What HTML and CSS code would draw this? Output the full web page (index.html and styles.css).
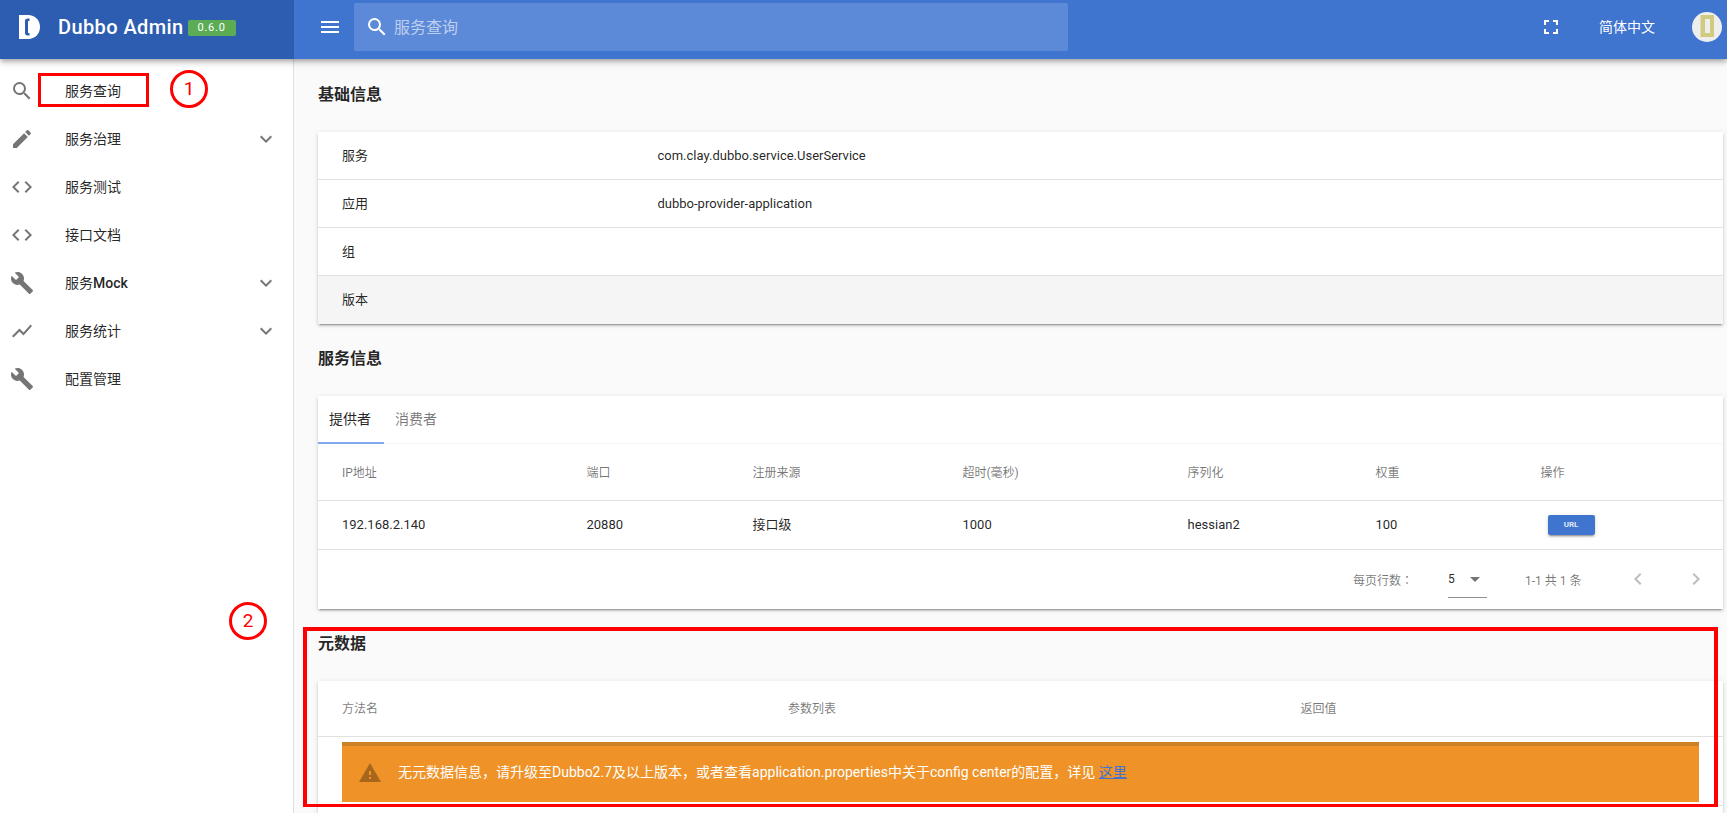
FILE: index.html
```html
<!DOCTYPE html>
<html lang="zh">
<head>
    <meta charset="UTF-8">
    <meta name="viewport" content="width=device-width, initial-scale=1.0">
    <title>Dubbo Admin</title>
    <link rel="stylesheet" href="styles.css">
</head>
<body>
    <svg class="icon-defs" xmlns="http://www.w3.org/2000/svg">
        <symbol id="i-search" viewBox="0 0 24 24"><path d="M15.5 14h-.79l-.28-.27A6.471 6.471 0 0 0 16 9.5 6.5 6.5 0 1 0 9.5 16c1.61 0 3.09-.59 4.23-1.57l.27.28v.79l5 4.99L20.49 19l-4.99-5zm-6 0C7.01 14 5 11.99 5 9.5S7.01 5 9.5 5 14 7.01 14 9.5 11.99 14 9.5 14z"/></symbol>
        <symbol id="i-pencil" viewBox="0 0 24 24"><path d="M3 17.25V21h3.75L17.81 9.94l-3.75-3.75L3 17.25zM20.71 7.04c.39-.39.39-1.02 0-1.41l-2.34-2.34c-.39-.39-1.02-.39-1.41 0l-1.83 1.83 3.75 3.75 1.83-1.83z"/></symbol>
        <symbol id="i-code" viewBox="0 0 24 24"><path d="M9.4 16.6L4.8 12l4.6-4.6L8 6l-6 6 6 6 1.4-1.4zm5.2 0l4.6-4.6-4.6-4.6L16 6l6 6-6 6-1.4-1.4z"/></symbol>
        <symbol id="i-build" viewBox="0 0 24 24"><path d="M22.7 19l-9.1-9.1c.9-2.3.4-5-1.5-6.9-2-2-5-2.4-7.4-1.3L9 6 6 9 1.6 4.7C.4 7.1.9 10.1 2.9 12.1c1.9 1.9 4.6 2.4 6.9 1.5l9.1 9.1c.4.4 1 .4 1.4 0l2.3-2.3c.5-.4.5-1.1.1-1.4z"/></symbol>
        <symbol id="i-chart" viewBox="0 0 24 24"><path d="M3.5 18.49l6-6.01 4 4L22 6.92l-1.41-1.41-7.09 7.97-4-4L2 16.99z"/></symbol>
        <symbol id="i-more" viewBox="0 0 24 24"><path d="M16.59 8.59L12 13.17 7.41 8.59 6 10l6 6 6-6z"/></symbol>
        <symbol id="i-left" viewBox="0 0 24 24"><path d="M15.41 7.41L14 6l-6 6 6 6 1.41-1.41L10.83 12z"/></symbol>
        <symbol id="i-right" viewBox="0 0 24 24"><path d="M10 6L8.59 7.41 13.17 12l-4.58 4.59L10 18l6-6z"/></symbol>
    </svg>

    <header class="toolbar">
        <div class="brand">
            <svg class="brand-logo" viewBox="0 0 21 24"><path fill="#fff" d="M0 0h9c7 0 12 5 12 12s-5 12-12 12H0z"/><path fill="#2d5db0" d="M10.500 3.500h-2C7 3.500 6 4.500 6 6v12c0 1.500 1 2.500 2.500 2.500h2V18h-1C9 18 9 17.500 9 17V7c0-.5 0-1 .5-1h1z"/></svg>
            <span class="brand-name">Dubbo Admin</span>
            <span class="brand-version">0.6.0</span>
        </div>
        <div class="toolbar-main">
            <button class="menu-btn" aria-label="menu"><span></span><span></span><span></span></button>
            <div class="search-box">
                <svg class="search-icon"><use href="#i-search"/></svg>
                <span class="search-text">服务查询</span>
            </div>
            <div class="toolbar-right">
                <svg class="fullscreen-icon" viewBox="0 0 14 14"><path fill="#fff" d="M0 0h5v2H2v3H0zM9 0h5v5h-2V2H9zM0 9h2v3h3v2H0zM12 9h2v5H9v-2h3z"/></svg>
                <span class="lang">简体中文</span>
                <div class="avatar">
                    <svg viewBox="0 0 30 30"><path fill="#cfcc80" fill-rule="evenodd" d="M8.500 3H22v22H8.500zM13 7v14h5V7z"/></svg>
                </div>
            </div>
        </div>
    </header>

    <div class="layout">
        <nav class="sidebar">
            <a class="nav-item"><svg class="nav-icon"><use href="#i-search"/></svg><span class="nav-text">服务查询</span></a>
            <a class="nav-item"><svg class="nav-icon"><use href="#i-pencil"/></svg><span class="nav-text">服务治理</span><svg class="nav-arrow"><use href="#i-more"/></svg></a>
            <a class="nav-item"><svg class="nav-icon"><use href="#i-code"/></svg><span class="nav-text">服务测试</span></a>
            <a class="nav-item"><svg class="nav-icon"><use href="#i-code"/></svg><span class="nav-text">接口文档</span></a>
            <a class="nav-item"><svg class="nav-icon"><use href="#i-build"/></svg><span class="nav-text">服务<b>Mock</b></span><svg class="nav-arrow"><use href="#i-more"/></svg></a>
            <a class="nav-item"><svg class="nav-icon"><use href="#i-chart"/></svg><span class="nav-text">服务统计</span><svg class="nav-arrow"><use href="#i-more"/></svg></a>
            <a class="nav-item"><svg class="nav-icon"><use href="#i-build"/></svg><span class="nav-text">配置管理</span></a>
        </nav>

        <main class="content">
            <h2 class="section-title">基础信息</h2>
            <section class="card">
                <div class="info-row"><span class="info-key">服务</span><span>com.clay.dubbo.service.UserService</span></div>
                <div class="info-row"><span class="info-key">应用</span><span>dubbo-provider-application</span></div>
                <div class="info-row"><span class="info-key">组</span><span></span></div>
                <div class="info-row info-row-hover"><span class="info-key">版本</span><span></span></div>
            </section>

            <h2 class="section-title">服务信息</h2>
            <section class="card">
                <div class="tabs">
                    <div class="tab tab-active">提供者</div>
                    <div class="tab">消费者</div>
                </div>
                <table class="grid grid-providers">
                    <colgroup>
                        <col class="c-ip"><col class="c-port"><col class="c-source"><col class="c-timeout"><col class="c-serial"><col class="c-weight"><col>
                    </colgroup>
                    <thead>
                        <tr><th>IP地址</th><th>端口</th><th>注册来源</th><th>超时(毫秒)</th><th>序列化</th><th>权重</th><th>操作</th></tr>
                    </thead>
                    <tbody>
                        <tr>
                            <td>192.168.2.140</td><td>20880</td><td class="cell-cjk">接口级</td><td>1000</td><td>hessian2</td><td>100</td>
                            <td><button class="url-btn">URL</button></td>
                        </tr>
                    </tbody>
                </table>
                <div class="pager">
                    <span class="pager-label" lang="zh-TW">每页行数：</span>
                    <div class="pager-select">
                        <span>5</span>
                        <i class="caret"></i>
                    </div>
                    <span class="pager-range">1-1 共 1 条</span>
                    <svg class="pager-nav pager-prev"><use href="#i-left"/></svg>
                    <svg class="pager-nav pager-next"><use href="#i-right"/></svg>
                </div>
            </section>

            <h2 class="section-title">元数据</h2>
            <section class="card card-last">
                <table class="grid grid-meta">
                    <colgroup><col class="c-method"><col class="c-params"><col></colgroup>
                    <thead>
                        <tr><th>方法名</th><th>参数列表</th><th>返回值</th></tr>
                    </thead>
                </table>
                <div class="alert-row">
                    <div class="alert">
                        <svg class="alert-icon" viewBox="0 0 24 24"><path d="M1 21h22L12 2 1 21zm12-3h-2v-2h2v2zm0-4h-2v-4h2v4z"/></svg>
                        <span class="alert-text">无元数据信息，请升级至Dubbo2.7及以上版本，或者查看application.properties中关于config center的配置，详见 <a class="alert-link">这里</a></span>
                    </div>
                </div>
            </section>
        </main>
    </div>

    <!-- 标注 -->
    <div class="mark-box mark-box-nav"></div>
    <div class="mark-num mark-num-1">1</div>
    <div class="mark-num mark-num-2">2</div>
    <div class="mark-box mark-box-meta"></div>
</body>
</html>
```

FILE: styles.css
```css
html, body {
    height: 100%;
}
body {
    margin: 0;
    overflow: hidden;
    position: relative;
    display: flex;
    flex-direction: column;
    background: #fafafa;
    color: rgba(0, 0, 0, 0.87);
    font-family: Roboto, "Noto Sans CJK SC", sans-serif;
    font-size: 13px;
}
.icon-defs {
    display: none;
}

/* 顶栏 */
.toolbar {
    height: 59px;
    flex: none;
    display: flex;
    background: #3f74cf;
    color: #fff;
    position: relative;
    z-index: 5;
    box-shadow: 0 2px 4px -1px rgba(0, 0, 0, 0.2), 0 4px 5px 0 rgba(0, 0, 0, 0.14), 0 1px 10px 0 rgba(0, 0, 0, 0.12);
}
.brand {
    width: 294px;
    flex: none;
    box-sizing: border-box;
    padding: 0 0 5px 19px;
    display: flex;
    align-items: center;
    background: #2d5db0;
}
.brand-logo {
    width: 21px;
    height: 24px;
    margin-right: 18px;
}
.brand-name {
    font-size: 20px;
    font-weight: 500;
    letter-spacing: 0.4px;
}
.brand-version {
    width: 48px;
    height: 16px;
    margin-left: 4px;
    margin-top: 2px;
    border-radius: 2px;
    background: #5cac56;
    font-size: 11px;
    line-height: 16px;
    text-align: center;
    letter-spacing: 0.8px;
}
.toolbar-main {
    flex: 1;
    display: flex;
    align-items: center;
    padding-bottom: 5px;
}
.menu-btn {
    width: 18px;
    height: 12px;
    margin-left: 27px;
    padding: 0;
    border: 0;
    background: none;
    display: flex;
    flex-direction: column;
    justify-content: space-between;
}
.menu-btn span {
    display: block;
    height: 2px;
    background: #fff;
}
.search-box {
    width: 714px;
    height: 48px;
    margin-left: 15px;
    border-radius: 2px;
    background: #5c89d8;
    display: flex;
    align-items: center;
}
.search-icon {
    width: 24px;
    height: 24px;
    margin-left: 11px;
    fill: #fff;
}
.search-text {
    margin: 0 0 3px 5px;
    font-size: 16px;
    color: rgba(255, 255, 255, 0.6);
}
.toolbar-right {
    margin-left: auto;
    display: flex;
    align-items: center;
    padding-right: 5px;
}
.fullscreen-icon {
    width: 14px;
    height: 14px;
}
.lang {
    margin: 0 0 3px 41px;
    font-size: 14px;
}
.avatar {
    width: 30px;
    height: 30px;
    margin-left: 37px;
    border-radius: 50%;
    background: #eeeeee;
    overflow: hidden;
}
.avatar svg {
    display: block;
    width: 30px;
    height: 30px;
}

/* 左侧菜单 */
.layout {
    flex: 1;
    display: flex;
    min-height: 0;
}
.sidebar {
    width: 294px;
    flex: none;
    box-sizing: border-box;
    padding-top: 8px;
    background: #fff;
    border-right: 1px solid #e0e0e0;
}
.nav-item {
    height: 48px;
    display: flex;
    align-items: center;
    padding: 0 15px 0 10px;
    font-size: 14px;
}
.nav-icon, .nav-arrow {
    width: 24px;
    height: 24px;
    flex: none;
    fill: rgba(0, 0, 0, 0.54);
}
.nav-text {
    margin: 0 0 3px 31px;
}
.nav-text b {
    font-weight: 500;
}
.nav-arrow {
    margin-left: auto;
}

/* 内容 */
.content {
    flex: 1;
    padding: 24px 4px 0 24px;
    min-width: 0;
    min-height: 0;
    overflow: hidden;
}
.section-title {
    margin: 0 0 25px;
    font-size: 16px;
    line-height: 24px;
    font-weight: 700;
}
.card {
    margin-bottom: 23px;
    background: #fff;
    box-shadow: 0 3px 1px -2px rgba(0, 0, 0, 0.2), 0 2px 2px 0 rgba(0, 0, 0, 0.14), 0 1px 5px 0 rgba(0, 0, 0, 0.12);
}
.card-last {
    margin-bottom: 0;
    height: 133px;
}
.info-row {
    height: 47px;
    display: flex;
    align-items: center;
    padding-left: 24px;
    border-bottom: 1px solid #e0e0e0;
}
.info-row:last-child {
    border-bottom: 0;
    height: 48px;
}
.info-row-hover {
    background: #f5f5f5;
}
.info-key {
    width: 315.5px;
    flex: none;
    margin-bottom: 3px;
}

/* 标签页 */
.tabs {
    height: 48px;
    display: flex;
    border-bottom: 1px solid #f5f5f5;
    box-sizing: border-box;
}
.tab {
    width: 66px;
    padding-right: 2px;
    text-align: center;
    font-size: 14px;
    line-height: 46px;
    color: rgba(0, 0, 0, 0.54);
    box-sizing: border-box;
}
.tab-active {
    color: rgba(0, 0, 0, 0.87);
    height: 48px;
    border-bottom: 2px solid #82a9f0;
}

/* 表格 */
.grid {
    width: 100%;
    table-layout: fixed;
    border-collapse: collapse;
}
.grid th {
    height: 56px;
    padding: 0 0 1px 24px;
    box-sizing: border-box;
    text-align: left;
    font-size: 12px;
    font-weight: 400;
    color: rgba(0, 0, 0, 0.54);
    border-bottom: 1px solid #e0e0e0;
}
.grid td {
    height: 49px;
    padding: 0 0 0 24px;
    box-sizing: border-box;
    border-bottom: 1px solid #e0e0e0;
}
.grid td.cell-cjk {
    padding-bottom: 2px;
}
.c-ip { width: 244.5px; }
.c-port { width: 166px; }
.c-source { width: 210px; }
.c-timeout { width: 225px; }
.c-serial { width: 188px; }
.c-weight { width: 165px; }
.c-method { width: 446px; }
.c-params { width: 512.5px; }

.url-btn {
    display: block;
    width: 47px;
    height: 20px;
    margin-left: 7px;
    padding: 0;
    border: 0;
    border-radius: 2px;
    background: #3f74cf;
    color: rgba(255, 255, 255, 0.85);
    font-family: Roboto, sans-serif;
    font-size: 8px;
    font-weight: 700;
    box-shadow: 0 3px 1px -2px rgba(0, 0, 0, 0.2), 0 2px 2px 0 rgba(0, 0, 0, 0.14), 0 1px 5px 0 rgba(0, 0, 0, 0.12);
}

/* 分页 */
.pager {
    height: 59px;
    display: flex;
    align-items: center;
    padding-left: 1035px;
    font-size: 12px;
    color: rgba(0, 0, 0, 0.54);
}
.pager-label {
    width: 95px;
    flex: none;
    font-family: Roboto, "Noto Sans CJK TC", sans-serif;
}
.pager-select {
    width: 39px;
    height: 36px;
    margin-top: 1px;
    flex: none;
    box-sizing: border-box;
    display: flex;
    align-items: center;
    border-bottom: 1px solid #8f8f8f;
    color: rgba(0, 0, 0, 0.87);
}
.caret {
    width: 0;
    height: 0;
    margin-left: 15px;
    border-left: 5px solid transparent;
    border-right: 5px solid transparent;
    border-top: 5px solid rgba(0, 0, 0, 0.54);
}
.pager-range {
    width: 101px;
    flex: none;
    margin-left: 38px;
}
.pager-nav {
    width: 24px;
    height: 24px;
    flex: none;
    fill: rgba(0, 0, 0, 0.26);
}
.pager-next {
    margin-left: 34px;
}

/* 提示 */
.alert-row {
    height: 69px;
    box-sizing: border-box;
    padding: 5px 24px 0;
    border-bottom: 1px solid #e0e0e0;
}
.alert {
    height: 60px;
    box-sizing: border-box;
    display: flex;
    align-items: center;
    padding-left: 16px;
    background: #ef9329;
    border-top: 4px solid #cc8127;
    color: #fff;
    font-size: 14px;
}
.alert-icon {
    width: 24px;
    height: 24px;
    flex: none;
    margin: 0 16px 2px 0;
    fill: rgba(0, 0, 0, 0.3);
}
.alert-text {
    margin-bottom: 6px;
}
.alert-link {
    color: #3f74cf;
    text-decoration: underline;
}

/* 标注 */
.mark-box {
    position: absolute;
    box-sizing: border-box;
    border: 3px solid #ff0000;
    z-index: 6;
}
.mark-box-nav {
    left: 38px;
    top: 73px;
    width: 111px;
    height: 34px;
}
.mark-box-meta {
    left: 303px;
    top: 627px;
    width: 1415px;
    height: 180px;
    border-width: 4px 4px 3px 4px;
}
.mark-num {
    position: absolute;
    box-sizing: border-box;
    width: 38px;
    height: 38px;
    border: 3px solid #ff0000;
    border-radius: 50%;
    color: #ff0000;
    font-size: 19px;
    line-height: 32px;
    text-align: center;
    background: #fff;
    z-index: 6;
}
.mark-num-1 {
    left: 170px;
    top: 70px;
}
.mark-num-2 {
    left: 229px;
    top: 602px;
}
```
